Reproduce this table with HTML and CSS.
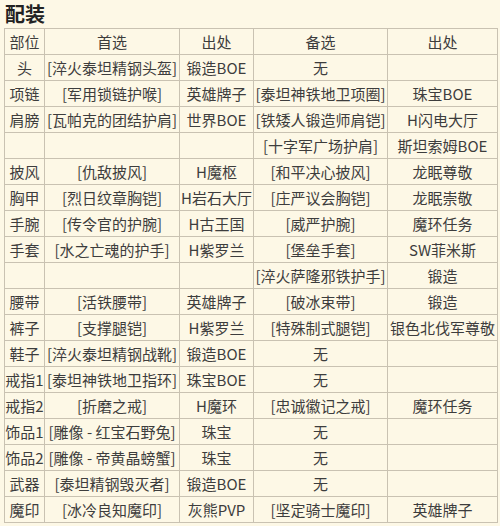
FILE: index.html
```html
<!DOCTYPE html>
<html lang="zh-CN">
<head>
<meta charset="utf-8">
<link rel="stylesheet" href="styles.css">
</head>
<body>
<h2 class="title">配装</h2>
<table class="gear">
<colgroup>
<col class="c1"><col class="c2"><col class="c3"><col class="c4"><col class="c5">
</colgroup>
<tr><td>部位</td><td>首选</td><td>出处</td><td>备选</td><td>出处</td></tr>
<tr><td>头</td><td>[淬火泰坦精钢头盔]</td><td>锻造BOE</td><td>无</td><td></td></tr>
<tr><td>项链</td><td>[军用锁链护喉]</td><td>英雄牌子</td><td>[泰坦神铁地卫项圈]</td><td>珠宝BOE</td></tr>
<tr><td>肩膀</td><td>[瓦帕克的团结护肩]</td><td>世界BOE</td><td>[铁矮人锻造师肩铠]</td><td>H闪电大厅</td></tr>
<tr><td></td><td></td><td></td><td>[十字军广场护肩]</td><td>斯坦索姆BOE</td></tr>
<tr><td>披风</td><td>[仇敌披风]</td><td>H魔枢</td><td>[和平决心披风]</td><td>龙眠尊敬</td></tr>
<tr><td>胸甲</td><td>[烈日纹章胸铠]</td><td>H岩石大厅</td><td>[庄严议会胸铠]</td><td>龙眠崇敬</td></tr>
<tr><td>手腕</td><td>[传令官的护腕]</td><td>H古王国</td><td>[威严护腕]</td><td>魔环任务</td></tr>
<tr><td>手套</td><td>[水之亡魂的护手]</td><td>H紫罗兰</td><td>[堡垒手套]</td><td>SW菲米斯</td></tr>
<tr><td></td><td></td><td></td><td>[淬火萨隆邪铁护手]</td><td>锻造</td></tr>
<tr><td>腰带</td><td>[活铁腰带]</td><td>英雄牌子</td><td>[破冰束带]</td><td>锻造</td></tr>
<tr><td>裤子</td><td>[支撑腿铠]</td><td>H紫罗兰</td><td>[特殊制式腿铠]</td><td>银色北伐军尊敬</td></tr>
<tr><td>鞋子</td><td>[淬火泰坦精钢战靴]</td><td>锻造BOE</td><td>无</td><td></td></tr>
<tr><td>戒指1</td><td>[泰坦神铁地卫指环]</td><td>珠宝BOE</td><td>无</td><td></td></tr>
<tr><td>戒指2</td><td>[折磨之戒]</td><td>H魔环</td><td>[忠诚徽记之戒]</td><td>魔环任务</td></tr>
<tr><td>饰品1</td><td>[雕像 - 红宝石野兔]</td><td>珠宝</td><td>无</td><td></td></tr>
<tr><td>饰品2</td><td>[雕像 - 帝黄晶螃蟹]</td><td>珠宝</td><td>无</td><td></td></tr>
<tr><td>武器</td><td>[泰坦精钢毁灭者]</td><td>锻造BOE</td><td>无</td><td></td></tr>
<tr><td>魔印</td><td>[冰冷良知魔印]</td><td>灰熊PVP</td><td>[坚定骑士魔印]</td><td>英雄牌子</td></tr>
</table>
</body>
</html>
```
FILE: styles.css
```css
html, body {
  margin: 0;
  padding: 0;
  background: #fdf8e6;
}
body {
  padding: 0 4px;
  font-family: "Noto Sans CJK SC", "Noto Sans", sans-serif;
  color: #3d3d3d;
}
.title {
  margin: 0;
  height: 28px;
  font-size: 20px;
  line-height: 28px;
  font-weight: bold;
  color: #222;
  padding-left: 1px;
}
.gear {
  border-collapse: collapse;
  table-layout: fixed;
  width: 493px;
  font-size: 15px;
}
.c1 { width: 40px; }
.c2 { width: 135px; }
.c3 { width: 74px; }
.c4 { width: 134px; }
.c5 { width: 110px; }
.gear td {
  border: 1px solid #c9c2b2;
  height: 25px;
  padding: 0;
  text-align: center;
  line-height: 25px;
  white-space: nowrap;
}
```
